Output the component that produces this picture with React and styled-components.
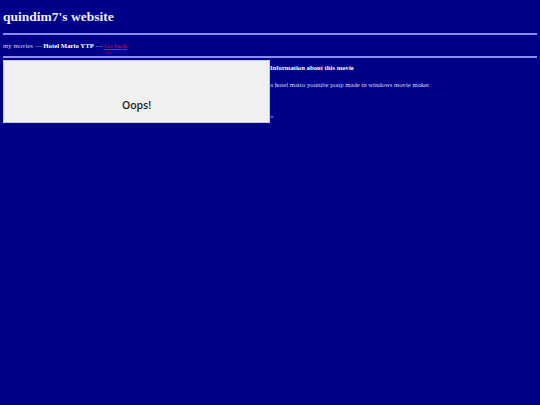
import React from 'react'
import styled, { createGlobalStyle } from 'styled-components'

const GlobalStyle = createGlobalStyle`
  html, body {
    margin: 0;
    padding: 0;
    background: #000088;
  }
  body {
    font-family: "Liberation Serif", "Times New Roman", serif;
    color: #e6e6f4;
  }
`;

const Page = styled.div`
  padding: 0 3px;
`;

const Title = styled.h1`
  font-size: 13.5px;
  font-weight: bold;
  color: #f0f0fa;
  margin: 0;
  padding: 9px 0 9px;
  line-height: 15px;
`;

const Rule = styled.hr`
  margin: 0;
  border: none;
  height: 2px;
  background: #8c8cf0;
`;

const Nav = styled.div`
  font-size: 6.8px;
  line-height: 9px;
  color: #cfcfe6;
  padding: 6px 0 6px;
  b {
    color: #ffffff;
  }
  a {
    color: #d4103c;
    text-decoration: underline;
  }
`;

const Content = styled.div`
  display: flex;
  align-items: flex-start;
  margin-top: 2px;
`;

const Embed = styled.div`
  position: relative;
  z-index: 1;
  flex: none;
  width: 265px;
  height: 61px;
  background: #f0f0f0;
  border: 1px solid #c9c9dc;
  display: flex;
  align-items: flex-end;
  justify-content: center;
  font-family: "Open Sans", "Noto Sans", sans-serif;
`;

const Oops = styled.span`
  font-size: 10.5px;
  font-weight: 600;
  color: #1e1e1e;
  line-height: 14px;
  margin-bottom: 10px;
`;

const Info = styled.div`
  font-size: 6.7px;
  line-height: 8px;
  color: #d8d8f0;
  padding-top: 4px;
`;

const InfoTitle = styled.div`
  font-weight: bold;
  color: #ffffff;
  margin-bottom: 9px;
`;

const InfoText = styled.p`
  margin: 0 0 23px;
`;

const MoreLink = styled.a`
  display: block;
  margin-left: -49px;
  color: #b0b0f0;
  text-decoration: none;
`;

export default function App() {
  return (
    <>
      <GlobalStyle />
      <Page>
        <Title>quindim7's website</Title>
        <Rule />
        <Nav>
          my movies — <b>Hotel Mario YTP</b> — <a href="#">Go back</a>
        </Nav>
        <Rule />
        <Content>
          <Embed>
            <Oops>Oops!</Oops>
          </Embed>
          <Info>
            <InfoTitle>Information about this movie</InfoTitle>
            <InfoText>a hotel mairo youtube poup made in windows movie maker</InfoText>
            <MoreLink href="#">watch on youtube »</MoreLink>
          </Info>
        </Content>
      </Page>
    </>
  )
}
